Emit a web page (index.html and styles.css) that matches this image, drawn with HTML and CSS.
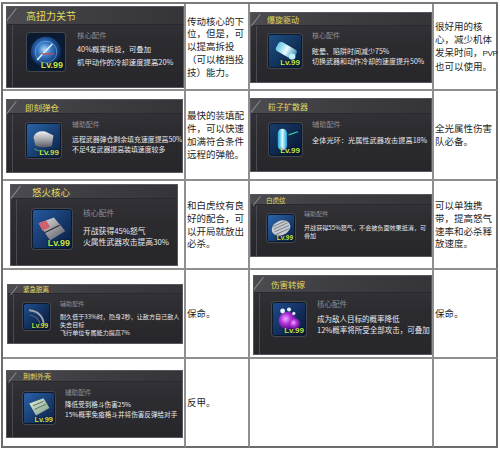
FILE: index.html
```html
<!DOCTYPE html>
<html lang="zh-CN">
<head>
<meta charset="utf-8">
<title>配件推荐</title>
<link rel="stylesheet" href="styles.css">
</head>
<body>
<div class="sheet">

  <div class="slot">
    <div class="card c1">
      <div class="card-head">高扭力关节</div>
      <div class="card-body">
        <div class="icon">
          <svg viewBox="0 0 40 40" preserveAspectRatio="none">
            <defs><radialGradient id="g1" cx="45%" cy="42%" r="60%"><stop offset="0" stop-color="#a9d9f8"/><stop offset=".35" stop-color="#3b7dc9"/><stop offset=".75" stop-color="#143d7a"/><stop offset="1" stop-color="#09172f"/></radialGradient></defs>
            <rect width="40" height="40" fill="#0b1a33"/>
            <circle cx="20" cy="20" r="17" fill="url(#g1)"/>
            <circle cx="20" cy="20" r="12" fill="none" stroke="#77b6ea" stroke-width="1" opacity=".7"/>
            <path d="M10 29 L27 11" stroke="#eaf5ff" stroke-width="1.6"/>
            <path d="M15 22 h14" stroke="#c44848" stroke-width="1.4"/>
          </svg>
          <span class="lv">Lv.99</span>
        </div>
        <div class="info">
          <div class="sub">核心配件</div>
          <div>40%概率拆投，可叠加</div>
          <div>机甲动作的冷却速度提高20%</div>
        </div>
      </div>
    </div>
  </div>
  <div class="note"><p>传动核心的下位，但是，可以提高拆投（可以格挡投技）能力。</p></div>

  <div class="slot">
    <div class="card c2">
      <div class="card-head">爆旋驱动</div>
      <div class="card-body">
        <div class="icon">
          <svg viewBox="0 0 40 40" preserveAspectRatio="none">
            <defs><linearGradient id="g2" x1="0" y1="0" x2="1" y2="1"><stop offset="0" stop-color="#1d4f86"/><stop offset="1" stop-color="#0a1d3a"/></linearGradient>
            <linearGradient id="g2b" x1="0" y1="0" x2="1" y2="0"><stop offset="0" stop-color="#5fc6e6"/><stop offset=".5" stop-color="#e8fbff"/><stop offset="1" stop-color="#3a8fb8"/></linearGradient></defs>
            <rect width="40" height="40" fill="url(#g2)"/>
            <rect x="8" y="12" width="26" height="13" rx="4" fill="url(#g2b)" transform="rotate(30 20 20)"/>
            <circle cx="29" cy="27" r="4" fill="#bff2ff"/>
          </svg>
          <span class="lv">Lv.99</span>
        </div>
        <div class="info">
          <div class="sub">核心配件</div>
          <div>眩晕、陷阱时间减少75%</div>
          <div>切换武器和动作冷却的速度提升50%</div>
        </div>
      </div>
    </div>
  </div>
  <div class="note"><p>很好用的核心，减少机体<span class="keep">发呆时间，<span class="latin">PVP</span></span>也可以使用。</p></div>

  <div class="slot">
    <div class="card c3">
      <div class="card-head">即刻弹仓</div>
      <div class="card-body">
        <div class="icon">
          <svg viewBox="0 0 40 40" preserveAspectRatio="none">
            <defs><linearGradient id="g3" x1="0" y1="0" x2="1" y2="1"><stop offset="0" stop-color="#2a64a8"/><stop offset="1" stop-color="#0b2146"/></linearGradient>
            <linearGradient id="g3b" x1="0" y1="0" x2="0" y2="1"><stop offset="0" stop-color="#f0f0f2"/><stop offset=".6" stop-color="#9a9aa2"/><stop offset="1" stop-color="#5a5a62"/></linearGradient></defs>
            <rect width="40" height="40" fill="url(#g3)"/>
            <path d="M8 16 Q10 8 22 9 L32 14 L30 27 Q18 30 10 26 Z" fill="url(#g3b)"/>
            <path d="M9 30 Q14 34 22 32" stroke="#5ad06a" stroke-width="1" fill="none"/>
          </svg>
          <span class="lv">Lv.99</span>
        </div>
        <div class="info">
          <div class="sub">辅助配件</div>
          <div>远程武器弹仓剩余填充速度提高50%</div>
          <div>不足4发武器提高装填速度较多</div>
        </div>
      </div>
    </div>
  </div>
  <div class="note"><p>最快的装填配件，可以快速加满符合条件远程的弹舱。</p></div>

  <div class="slot">
    <div class="card c4">
      <div class="card-head">粒子扩散器</div>
      <div class="card-body">
        <div class="icon">
          <svg viewBox="0 0 40 40" preserveAspectRatio="none">
            <defs><linearGradient id="g4" x1="0" y1="0" x2="1" y2="1"><stop offset="0" stop-color="#173d6e"/><stop offset="1" stop-color="#081630"/></linearGradient>
            <linearGradient id="g4b" x1="0" y1="0" x2="1" y2="0"><stop offset="0" stop-color="#1aa0d8"/><stop offset=".5" stop-color="#d8fbff"/><stop offset="1" stop-color="#1aa0d8"/></linearGradient></defs>
            <rect width="40" height="40" fill="url(#g4)"/>
            <rect x="10" y="6" width="12" height="28" rx="6" fill="url(#g4b)"/>
            <path d="M24 14 L36 10" stroke="#38d0a0" stroke-width="1.5"/>
          </svg>
          <span class="lv">Lv.99</span>
        </div>
        <div class="info">
          <div class="sub">辅助配件</div>
          <div>全体光环：光属性武器攻击提高18%</div>
        </div>
      </div>
    </div>
  </div>
  <div class="note"><p>全光属性伤害队必备。</p></div>

  <div class="slot">
    <div class="card c5">
      <div class="card-head">怒火核心</div>
      <div class="card-body">
        <div class="icon">
          <svg viewBox="0 0 40 40" preserveAspectRatio="none">
            <defs><linearGradient id="g5" x1="0" y1="0" x2="1" y2="1"><stop offset="0" stop-color="#2459a0"/><stop offset="1" stop-color="#0a1c3e"/></linearGradient>
            <linearGradient id="g5b" x1="0" y1="0" x2="1" y2="1"><stop offset="0" stop-color="#e6e6ea"/><stop offset="1" stop-color="#55555e"/></linearGradient></defs>
            <rect width="40" height="40" fill="url(#g5)"/>
            <path d="M6 14 L22 8 L34 22 L18 32 Z" fill="url(#g5b)"/>
            <path d="M6 14 L14 11 L18 18 L10 22 Z" fill="#d0606c"/>
            <path d="M12 24 L28 16" stroke="#2a2a30" stroke-width="1.2"/>
          </svg>
          <span class="lv">Lv.99</span>
        </div>
        <div class="info">
          <div class="sub">核心配件</div>
          <div>开战获得45%怒气</div>
          <div>火属性武器攻击提高30%</div>
        </div>
      </div>
    </div>
  </div>
  <div class="note"><p>和白虎纹有良好的配合，可以开局就放出必杀。</p></div>

  <div class="slot">
    <div class="card c6">
      <div class="card-head">白虎纹</div>
      <div class="card-body">
        <div class="icon">
          <svg viewBox="0 0 40 40" preserveAspectRatio="none">
            <defs><linearGradient id="g6" x1="0" y1="0" x2="1" y2="1"><stop offset="0" stop-color="#2c66b0"/><stop offset="1" stop-color="#0b2046"/></linearGradient></defs>
            <rect width="40" height="40" fill="url(#g6)"/>
            <ellipse cx="20" cy="20" rx="15" ry="11" fill="#c8ccd0" transform="rotate(-25 20 20)"/>
            <path d="M9 22 L30 12 M10 26 L32 16 M12 30 L32 21 M8 18 L27 9" stroke="#6a7078" stroke-width="1.3"/>
          </svg>
          <span class="lv">Lv.99</span>
        </div>
        <div class="info">
          <div class="sub">辅助配件</div>
          <div>开战获得55%怒气，不会被负面效果抵消，可</div>
          <div>叠加</div>
        </div>
      </div>
    </div>
  </div>
  <div class="note"><p>可以单独携带，提高怒气速率和必杀释放速度。</p></div>

  <div class="slot">
    <div class="card c7">
      <div class="card-head">紧急脱离</div>
      <div class="card-body">
        <div class="icon">
          <svg viewBox="0 0 40 40" preserveAspectRatio="none">
            <defs><linearGradient id="g7" x1="0" y1="0" x2="1" y2="1"><stop offset="0" stop-color="#1f4f90"/><stop offset="1" stop-color="#081632"/></linearGradient></defs>
            <rect width="40" height="40" fill="url(#g7)"/>
            <path d="M8 10 Q30 12 32 34" stroke="#9aa4b0" stroke-width="3" fill="none"/>
            <path d="M10 18 Q24 20 26 34" stroke="#5a6878" stroke-width="2" fill="none"/>
          </svg>
          <span class="lv">Lv.99</span>
        </div>
        <div class="info">
          <div class="sub">辅助配件</div>
          <div>耐久低于33%时，隐身2秒，让敌方自己敌人</div>
          <div>失去目标</div>
          <div>飞行单位专属能力提高7%</div>
        </div>
      </div>
    </div>
  </div>
  <div class="note"><p>保命。</p></div>

  <div class="slot">
    <div class="card c8">
      <div class="card-head">伤害转嫁</div>
      <div class="card-body">
        <div class="icon">
          <svg viewBox="0 0 40 40" preserveAspectRatio="none">
            <defs><linearGradient id="g8" x1="0" y1="0" x2="1" y2="1"><stop offset="0" stop-color="#1d4a8c"/><stop offset="1" stop-color="#0a1838"/></linearGradient>
            <radialGradient id="g8b" cx="40%" cy="40%" r="60%"><stop offset="0" stop-color="#f0a8ff"/><stop offset=".5" stop-color="#b030d8"/><stop offset="1" stop-color="#5a1090"/></radialGradient></defs>
            <rect width="40" height="40" fill="url(#g8)"/>
            <circle cx="18" cy="22" r="11" fill="url(#g8b)"/>
            <circle cx="27" cy="26" r="7" fill="url(#g8b)"/>
            <circle cx="12" cy="10" r="3" fill="#e8f0ff"/>
            <circle cx="20" cy="8" r="2.5" fill="#e8f0ff"/>
            <circle cx="26" cy="13" r="2" fill="#dfe8ff"/>
          </svg>
          <span class="lv">Lv.99</span>
        </div>
        <div class="info">
          <div class="sub">核心配件</div>
          <div>成为敌人目标的概率降低</div>
          <div>12%概率将所受全部攻击，可叠加</div>
        </div>
      </div>
    </div>
  </div>
  <div class="note"><p>保命。</p></div>

  <div class="slot">
    <div class="card c9">
      <div class="card-head">荆刺外壳</div>
      <div class="card-body">
        <div class="icon">
          <svg viewBox="0 0 40 40" preserveAspectRatio="none">
            <defs><linearGradient id="g9" x1="0" y1="0" x2="1" y2="1"><stop offset="0" stop-color="#2a62aa"/><stop offset="1" stop-color="#0b1f44"/></linearGradient>
            <linearGradient id="g9b" x1="0" y1="0" x2="1" y2="1"><stop offset="0" stop-color="#e4f2de"/><stop offset="1" stop-color="#7c9a84"/></linearGradient></defs>
            <rect width="40" height="40" fill="url(#g9)"/>
            <path d="M7 14 L26 7 L34 20 L16 30 Z" fill="url(#g9b)"/>
            <path d="M12 17 L26 11 M14 22 L29 15" stroke="#4e6a58" stroke-width="1.2"/>
          </svg>
          <span class="lv">Lv.99</span>
        </div>
        <div class="info">
          <div class="sub">辅助配件</div>
          <div>降低受到格斗伤害25%</div>
          <div>15%概率免疫格斗并将伤害反弹给对手</div>
        </div>
      </div>
    </div>
  </div>
  <div class="note"><p>反甲。</p></div>
  <div class="blank"></div>
  <div class="blank"></div>

</div>
</body>
</html>
```
FILE: styles.css
```css
* {
  box-sizing: border-box;
}

html,
body {
  margin: 0;
  padding: 0;
  background: #ffffff;
}

body {
  width: 500px;
  height: 451px;
  overflow: hidden;
  font-family: "Noto Sans CJK SC", "Noto Sans", sans-serif;
}

.sheet {
  display: grid;
  grid-template-columns: 183px 64px 184px 64px;
  grid-template-rows: 87px 90px 89px 89px 89px;
  width: max-content;
  margin: 2px 0 0 1px;
  border-left: 2px solid #6c6c6c;
  border-top: 2px solid #7a7a7a;
}

.slot,
.note,
.blank {
  border-right: 2px solid #8f8f8f;
  border-bottom: 2px solid #8f8f8f;
}

.sheet > :nth-child(4n) {
  border-right-color: #6c6c6c;
}

.sheet > :nth-last-child(-n + 4) {
  border-bottom-color: #6c6c6c;
}

/* text cells */
.note {
  display: flex;
  align-items: center;
  padding: 0 0 0 1px;
  color: #1f1f1f;
  font-size: 9.5px;
  line-height: 12.8px;
}

.note p {
  margin: 0;
}

.keep {
  white-space: nowrap;
}

.latin {
  font-family: "Liberation Sans", sans-serif;
  font-size: 8px;
  letter-spacing: -0.3px;
}

/* card cells */
.slot {
  display: flex;
  align-items: flex-start;
}

.card {
  position: relative;
  display: flex;
  flex-direction: column;
  flex: none;
  width: var(--w);
  height: var(--h);
  margin: var(--mt) 0 0 var(--ml);
  overflow: hidden;
  border: 1px solid #56565c;
  background: linear-gradient(180deg, #35353b 0%, #2b2b30 45%, #26262b 100%);
}

.card::before {
  content: "";
  position: absolute;
  left: 9px;
  top: 1px;
  width: 1px;
  height: calc(var(--hh) + 2px);
  background: #8c8c90;
  transform: rotate(38deg);
  transform-origin: top left;
}

.card-head {
  flex: none;
  height: var(--hh);
  padding-left: calc(var(--tl) - 1px);
  color: #e2da5a;
  font-size: var(--tf);
  line-height: var(--hh);
  white-space: nowrap;
  background: linear-gradient(90deg, #4b4b50 0%, #3d3d42 45%, #343439 100%);
  border-bottom: 1px solid #2a2a2e;
}

.card-body {
  display: flex;
  align-items: flex-start;
  flex: 1;
  gap: var(--gap);
  margin-left: 5px;
  padding: var(--bt) 0 0 calc(var(--il) - 7px);
  border-left: 1px solid #4a4a50;
}

.icon {
  position: relative;
  flex: none;
  width: var(--is);
  height: var(--is);
  overflow: hidden;
  border: 1px solid #0d1828;
  border-radius: 3px;
  box-shadow: 0 0 0 1px #41464f;
}

.icon svg {
  display: block;
  width: 100%;
  height: 100%;
}

.lv {
  position: absolute;
  right: 1px;
  bottom: 0;
  color: #c8e24c;
  font-family: "Liberation Sans", sans-serif;
  font-weight: bold;
  font-size: var(--lv);
  line-height: 1;
  text-shadow: 0 0 2px #000000;
}

.info {
  margin-top: var(--it);
  color: #e8e8ea;
  font-size: var(--fs);
  line-height: var(--lh);
  white-space: nowrap;
}

.sub {
  margin-bottom: var(--sg);
  color: #8e8e94;
}

/* per-card sizes (each card is a screenshot at its own scale) */
.c1 { --w: 178px; --h: 82px; --mt: 2px; --ml: 3px; --hh: 18px; --tf: 10px; --tl: 20px; --il: 21px; --bt: 8px; --is: 38px; --gap: 12px; --fs: 7.4px; --lh: 13px; --it: -5px; --sg: 1px; --lv: 9px; }
.c2 { --w: 182px; --h: 71px; --mt: 8px; --ml: 0px; --hh: 13px; --tf: 8px; --tl: 17px; --il: 18px; --bt: 8px; --is: 34px; --gap: 10px; --fs: 7px; --lh: 10px; --it: -4px; --sg: 6px; --lv: 8px; }
.c3 { --w: 177px; --h: 74px; --mt: 8px; --ml: 3px; --hh: 14px; --tf: 8.5px; --tl: 19px; --il: 20px; --bt: 9px; --is: 35px; --gap: 11px; --fs: 6.9px; --lh: 10px; --it: -4px; --sg: 5px; --lv: 8px; }
.c4 { --w: 182px; --h: 74px; --mt: 7px; --ml: 0px; --hh: 15px; --tf: 8px; --tl: 18px; --il: 19px; --bt: 9px; --is: 33px; --gap: 10px; --fs: 7.2px; --lh: 11px; --it: -4px; --sg: 5px; --lv: 8px; }
.c5 { --w: 168px; --h: 82px; --mt: 3px; --ml: 7px; --hh: 14px; --tf: 9.5px; --tl: 22px; --il: 22px; --bt: 10px; --is: 40px; --gap: 11px; --fs: 7.8px; --lh: 11px; --it: -2px; --sg: 7px; --lv: 9px; }
.c6 { --w: 182px; --h: 63px; --mt: 13px; --ml: 0px; --hh: 10px; --tf: 6.5px; --tl: 16px; --il: 17px; --bt: 9px; --is: 28px; --gap: 9px; --fs: 6.1px; --lh: 8.5px; --it: -4px; --sg: 5px; --lv: 6.5px; }
.c7 { --w: 176px; --h: 60px; --mt: 14px; --ml: 4px; --hh: 9px; --tf: 6.5px; --tl: 16px; --il: 16px; --bt: 9px; --is: 27px; --gap: 10px; --fs: 6.1px; --lh: 8.2px; --it: -3px; --sg: 4.5px; --lv: 6.5px; }
.c8 { --w: 179px; --h: 80px; --mt: 5px; --ml: 3px; --hh: 17px; --tf: 8.5px; --tl: 18px; --il: 19px; --bt: 9px; --is: 34px; --gap: 11px; --fs: 7.5px; --lh: 11px; --it: -4px; --sg: 4px; --lv: 8px; }
.c9 { --w: 177px; --h: 68px; --mt: 11px; --ml: 3px; --hh: 11px; --tf: 7px; --tl: 17px; --il: 17px; --bt: 10px; --is: 32px; --gap: 10px; --fs: 6.6px; --lh: 9.5px; --it: -4px; --sg: 2.5px; --lv: 7.5px; }
```
